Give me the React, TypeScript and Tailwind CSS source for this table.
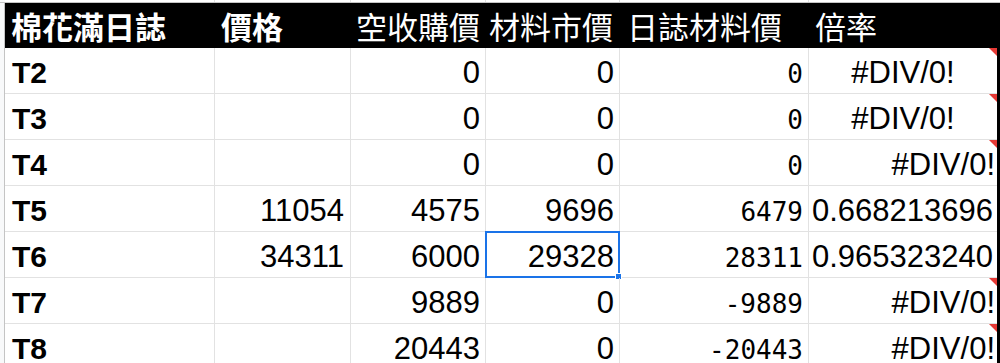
import React from 'react';

type Row = {
  label: string;
  price: string;
  buy: string;
  market: string;
  log: string;
  rate: string;
  rateAlign: 'center' | 'right' | 'left';
  flag: boolean;
};

const rows: Row[] = [
  { label: 'T2', price: '', buy: '0', market: '0', log: '0', rate: '#DIV/0!', rateAlign: 'center', flag: true },
  { label: 'T3', price: '', buy: '0', market: '0', log: '0', rate: '#DIV/0!', rateAlign: 'center', flag: true },
  { label: 'T4', price: '', buy: '0', market: '0', log: '0', rate: '#DIV/0!', rateAlign: 'right', flag: true },
  { label: 'T5', price: '11054', buy: '4575', market: '9696', log: '6479', rate: '0.668213696', rateAlign: 'left', flag: false },
  { label: 'T6', price: '34311', buy: '6000', market: '29328', log: '28311', rate: '0.965323240', rateAlign: 'left', flag: false },
  { label: 'T7', price: '', buy: '9889', market: '0', log: '-9889', rate: '#DIV/0!', rateAlign: 'right', flag: true },
  { label: 'T8', price: '', buy: '20443', market: '0', log: '-20443', rate: '#DIV/0!', rateAlign: 'right', flag: true },
];

const sans = "font-['Liberation_Sans',Arial,sans-serif]";
const mono = "font-['DejaVu_Sans_Mono',monospace]";
const cjk = "font-['Noto_Sans_CJK_TC','Noto_Sans',sans-serif]";

const cell = 'h-[46px] border-r border-b border-[#e2e2e2] flex items-end overflow-hidden whitespace-nowrap';

export default function App() {
  return (
    <div className="w-[1000px] h-[363px] overflow-hidden bg-white">
      {/* top strip (row above) */}
      <div className="h-[3px] border-b border-[#c4c4c4] flex">
        <div className="w-[5px] bg-[#f8f9fa]" />
        <div className="w-[210px] border-r border-[#e2e2e2]" />
        <div className="w-[136px] border-r border-[#e2e2e2]" />
        <div className="w-[135px] border-r border-[#e2e2e2]" />
        <div className="w-[134px] border-r border-[#e2e2e2]" />
        <div className="w-[189px] border-r border-[#e2e2e2]" />
      </div>

      <div className="flex">
        {/* row header edge */}
        <div className="w-[5px] bg-[#f8f9fa] border-r border-[#c4c4c4]" />

        <div className="w-[992px]">
          {/* header row */}
          <div className={`h-[45px] bg-black text-white text-[31px] leading-none flex items-center ${cjk}`}>
            <div className="w-[210px] pl-[6px] font-bold">棉花滿日誌</div>
            <div className="w-[136px] pl-[6px] font-bold">價格</div>
            <div className="w-[135px] pl-[5px]">空收購價</div>
            <div className="w-[134px] pl-[3px] whitespace-nowrap">材料市價</div>
            <div className="w-[189px] pl-[7px] whitespace-nowrap">日誌材料價</div>
            <div className="w-[188px] pl-[6px]">倍率</div>
          </div>

          {rows.map((r) => (
            <div key={r.label} className="flex text-black">
              <div className={`${cell} w-[210px] pl-[7px] pb-[5px] text-[30px] leading-none font-bold ${sans}`}>{r.label}</div>
              <div className={`${cell} w-[136px] justify-end pr-[6px] pb-[5px] text-[31px] leading-none ${sans}`}>{r.price}</div>
              <div className={`${cell} w-[135px] justify-end pr-[5px] pb-[5px] text-[31px] leading-none ${sans}`}>{r.buy}</div>
              <div className={`${cell} w-[134px] justify-end pr-[5px] pb-[5px] text-[31px] leading-none relative overflow-visible ${sans}`}>
                {r.market}
                {r.label === 'T6' && (
                  <div className="absolute -left-px -top-px -right-px -bottom-px border-2 border-[#1a73e8]">
                    <div className="absolute -right-[4px] -bottom-[4px] w-[7px] h-[7px] bg-[#1a73e8] border border-white" />
                  </div>
                )}
              </div>
              <div className={`${cell} w-[189px] justify-end pr-[5px] pb-[6px] text-[26px] leading-none ${mono}`}>{r.log}</div>
              <div
                className={`${cell} w-[188px] border-r-0 pb-[5px] text-[31px] leading-none relative ${sans} ${
                  r.rateAlign === 'center' ? 'justify-center' : r.rateAlign === 'right' ? 'justify-end pr-[2px]' : 'justify-start pl-[3px]'
                }`}
              >
                {r.rate}
                {r.flag && (
                  <div className="absolute top-0 right-0 w-0 h-0 border-t-[8px] border-t-[#e53935] border-l-[8px] border-l-transparent" />
                )}
              </div>
            </div>
          ))}
        </div>

        {/* right edge */}
        <div className="w-[3px] bg-black" />
      </div>
    </div>
  );
}
